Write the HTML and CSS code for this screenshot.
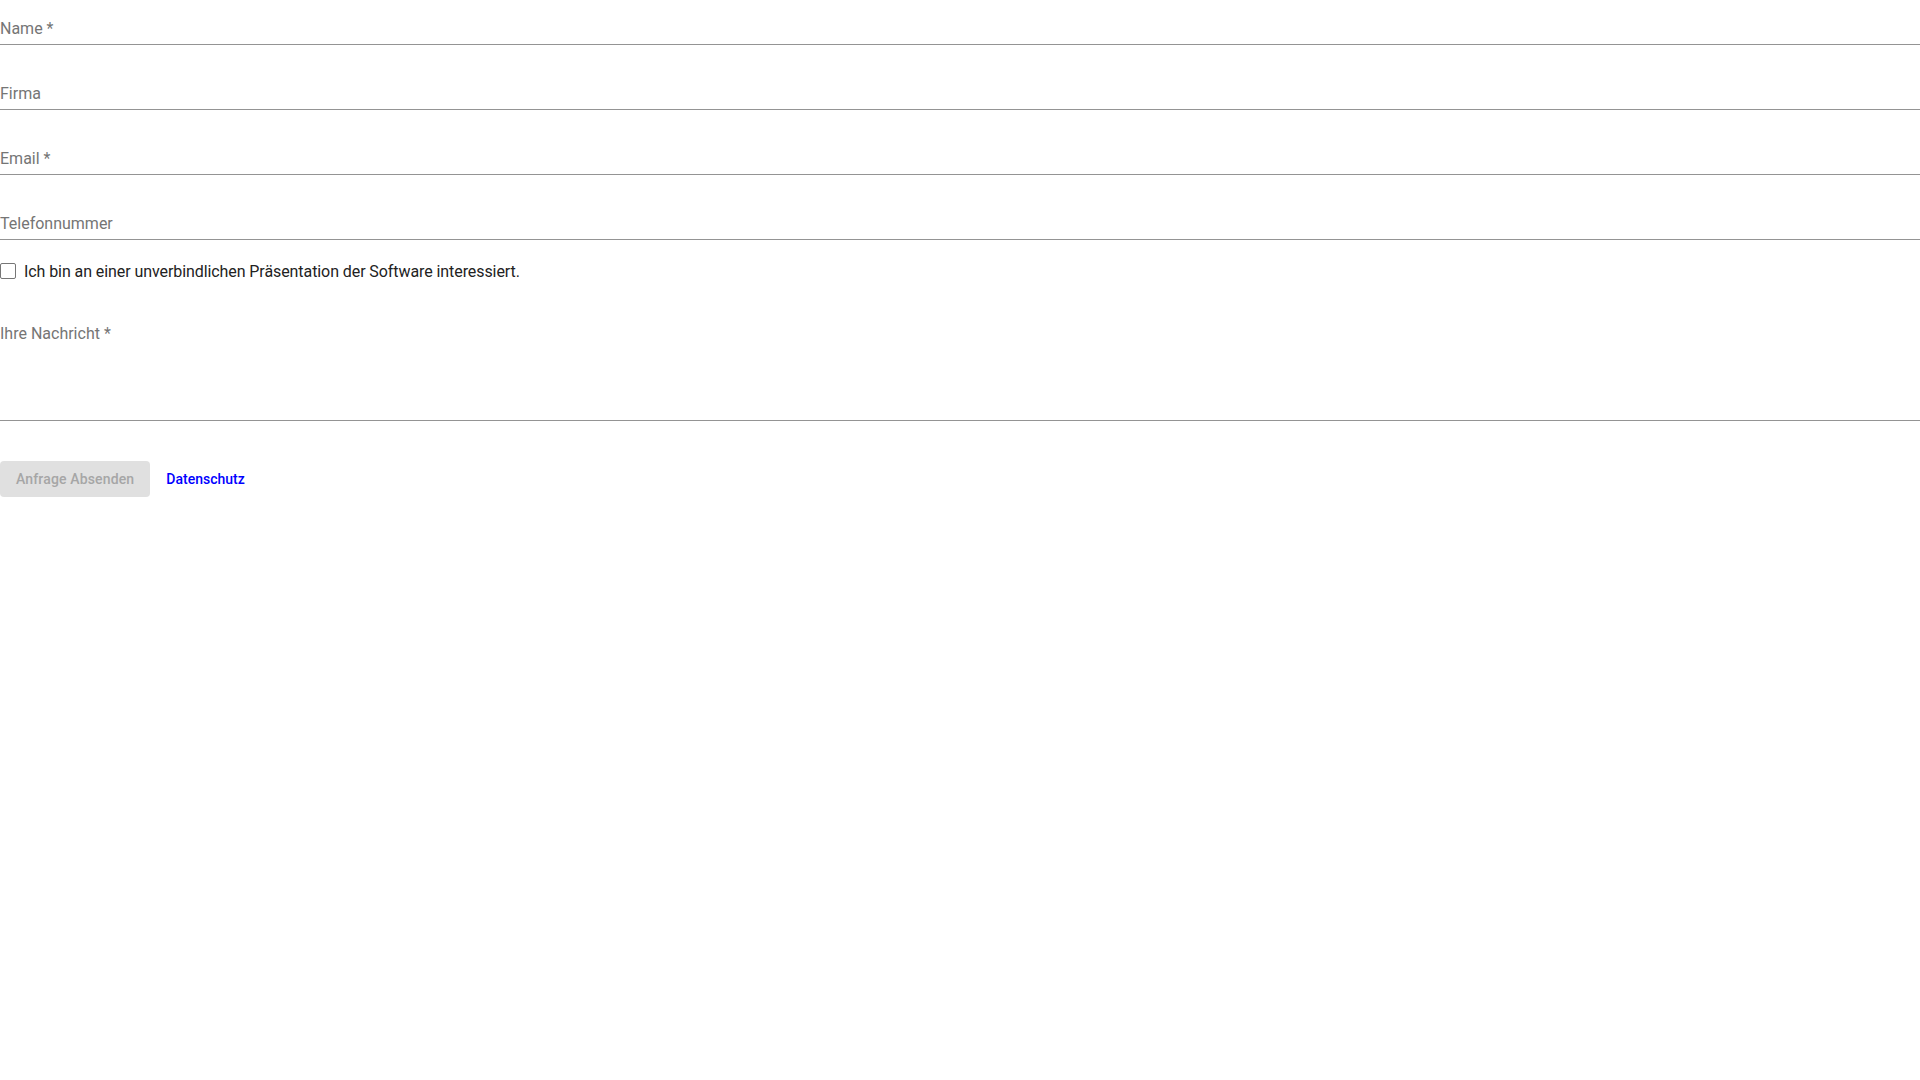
FILE: index.html
```html
<!DOCTYPE html>
<html>
  <head>
    <title>Anfrage</title>
    <meta name="viewport" content="width=device-width, initial-scale=1.0" />
    <link rel="stylesheet" href="styles.css">
  </head>
  <body>
    <form class="contact-form">
      <div class="field">
        <span class="field-label">Name *</span>
      </div>
      <div class="field">
        <span class="field-label">Firma</span>
      </div>
      <div class="field">
        <span class="field-label">Email *</span>
      </div>
      <div class="field">
        <span class="field-label">Telefonnummer</span>
      </div>
      <label class="check-row">
        <span class="check-box"></span>
        <span class="check-text">Ich bin an einer unverbindlichen Präsentation der Software interessiert.</span>
      </label>
      <div class="field field-message">
        <span class="field-label">Ihre Nachricht *</span>
        <div class="message-area"></div>
      </div>
      <div class="actions">
        <div class="button disabled">Anfrage Absenden</div>
        <a class="privacy-link" href="#">Datenschutz</a>
      </div>
    </form>
  </body>
</html>
```

FILE: styles.css
```css
* {
  box-sizing: border-box;
}
body {
  margin: 0;
  background: #ffffff;
  font-family: Roboto, "Liberation Sans", sans-serif;
}
.contact-form {
  display: flex;
  flex-direction: column;
}
.field {
  display: flex;
  flex-direction: column;
  padding-top: 21px;
  padding-bottom: 7px;
  margin-bottom: 20px;
  border-bottom: 1px solid #949494;
}
.field-label {
  font-size: 16px;
  line-height: 16px;
  color: #757575;
}
.check-row {
  display: flex;
  align-items: center;
  gap: 8px;
  height: 24px;
  margin-top: -1px;
  cursor: pointer;
}
.check-box {
  width: 16px;
  height: 16px;
  border: 1.5px solid #767676;
  border-radius: 2px;
  flex-shrink: 0;
}
.check-text {
  font-size: 16px;
  letter-spacing: -0.08px;
  color: #222222;
}
.field-message {
  margin-top: 22px;
  margin-bottom: 0;
  padding-bottom: 0;
}
.message-area {
  height: 78px;
}
.actions {
  display: flex;
  align-items: center;
  gap: 16px;
  margin-top: 40px;
}
.button {
  height: 36px;
  padding: 0 16px;
  display: flex;
  align-items: center;
  border-radius: 4px;
  font-size: 14px;
  font-weight: 500;
  letter-spacing: 0.15px;
}
.disabled {
  background: #e0e0e0;
  color: #a6a6a6;
}
.privacy-link {
  font-size: 14px;
  font-weight: 500;
  color: #0000ff;
  text-decoration: none;
}
```
